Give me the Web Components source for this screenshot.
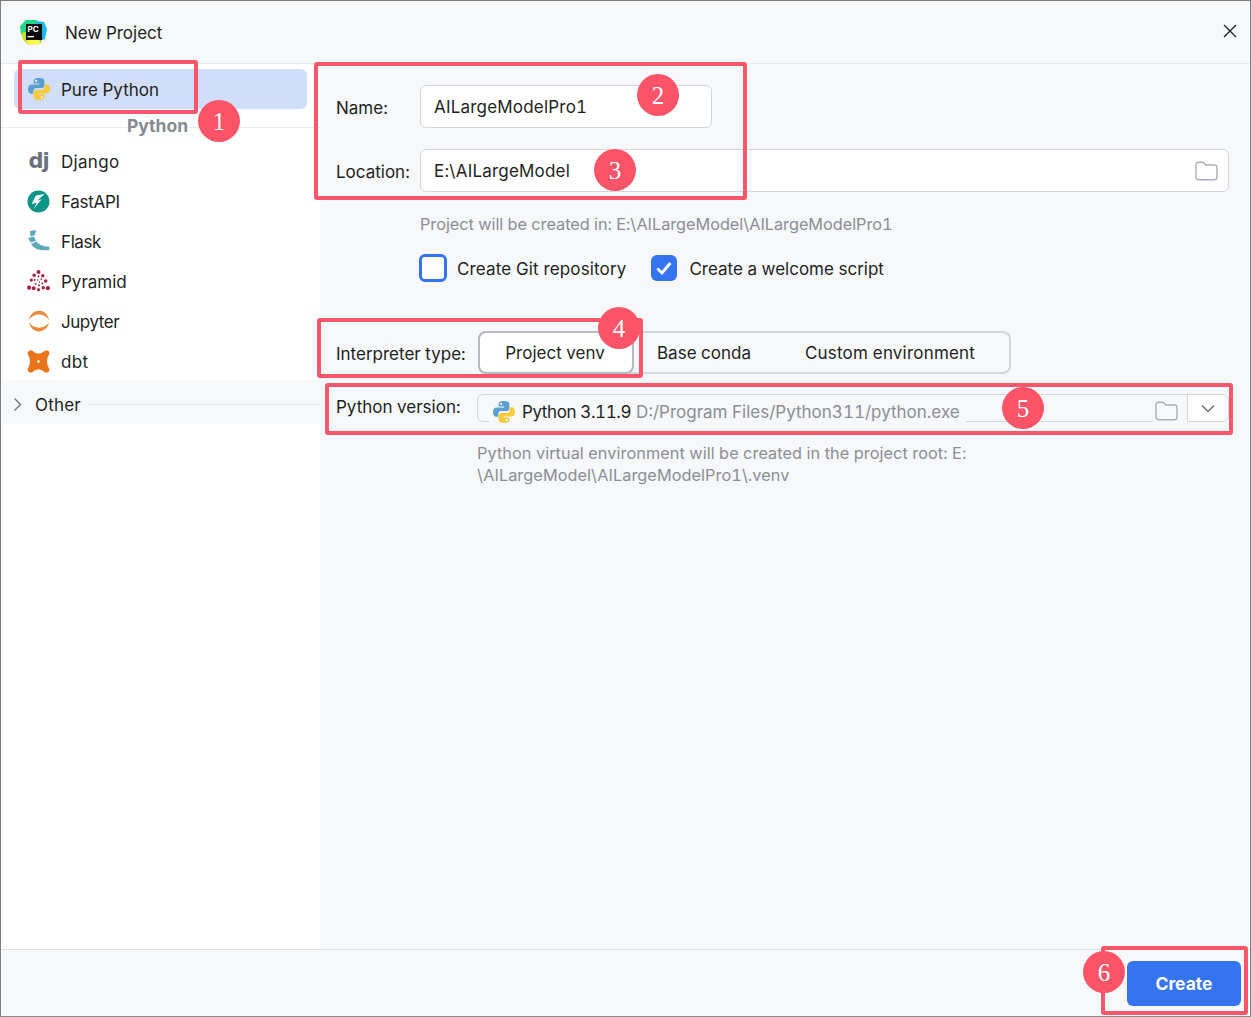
<!DOCTYPE html>
<html lang="en"><head><meta charset="utf-8"><title>New Project</title>
<style>
html,body{margin:0;padding:0;background:#fff}
body{font:17px/24px Inter,"Noto Sans",sans-serif;color:#1e1f22;font-variant-numeric:tabular-nums}
</style></head>
<body>
<template id="py"><svg width="24" height="24" viewBox="0 0 24 24"><path fill="#5a9fd0" d="M11.9 1C7 1 6.6 3 6.6 4.200V6.600H12.200V7.400H4.500C2.500 7.400 1 9 1 12S2.400 16.800 4.200 16.800H6.300V14C6.300 12.200 7.600 11 9.400 11H14.600C16.200 11 17.400 9.800 17.400 8.300V4C17.400 2.300 15.600 1 11.900 1Z"/><circle cx="9.200" cy="3.900" r="1.100" fill="#fff"/><g transform="rotate(180 12 12)"><path fill="#f8ca3c" d="M11.900 1C7 1 6.600 3 6.600 4.200V6.600H12.200V7.400H4.500C2.500 7.400 1 9 1 12S2.400 16.800 4.200 16.800H6.300V14C6.300 12.200 7.600 11 9.400 11H14.600C16.200 11 17.400 9.800 17.400 8.300V4C17.400 2.300 15.600 1 11.900 1Z"/><circle cx="9.200" cy="3.900" r="1.100" fill="#fff"/></g></svg></template>
<template id="folder"><svg width="23" height="20" viewBox="0 0 23 20" fill="none" stroke="#a9aeb9" stroke-width="1.4"><path d="M1 4C1 2.300 2 1.200 3.600 1.200H8.200L10.800 4H19.400C21 4 22 5 22 6.600V16C22 17.700 21 18.800 19.400 18.800H3.600C2 18.800 1 17.700 1 16Z"/></svg></template>

<script>
function el(id){return document.getElementById(id).content.cloneNode(true)}
function def(name,css,html,setup){
  customElements.define(name,class extends HTMLElement{
    connectedCallback(){
      if(this.shadowRoot)return;
      const s=this.attachShadow({mode:'open'});
      s.innerHTML='<style>'+css+'</style>'+(typeof html==='function'?html(this):html);
      if(setup)setup(s,this);
    }
  });
}
def('np-title',`:host{display:flex;align-items:center;height:63px;box-sizing:border-box;padding:0 12px 0 19px;background:#f7f8fa;border-bottom:1px solid #e9eaee;flex:none}
.t{margin-left:18px;flex:1;position:relative;top:1px}svg{display:block}`,
`<svg width="27" height="27" viewBox="0 0 27 27"><path fill="#21d789" d="M6 1 17 1 20 8 12 15 1 16 0 7Z"/><path fill="#c8e030" d="M1 14 10 12 19 18 22 24 9 26 3 21Z"/><path fill="#fcf84a" d="M6 19 19 19 20 25 9 26Z"/><path fill="#19b8e8" d="M16 2 24 3 27 10 25 20 20 22Z"/><rect x="6" y="5" width="16" height="16" fill="#0c0c0c"/><text x="7.500" y="13" font-family="Inter,sans-serif" font-size="8" font-weight="700" fill="#fff">PC</text><rect x="7.500" y="17" width="6.500" height="1.300" fill="#fff"/></svg><span class="t"><slot></slot></span><svg width="16" height="16" viewBox="0 0 16 16" stroke="#1e1f22" stroke-width="1.300" fill="none" style="margin-top:-2px"><path d="M2 2 14 14M14 2 2 14"/></svg>`);

def('np-row',`:host{display:flex;align-items:center;height:40px;padding-left:26px;gap:11px;flex:none}
:host([selected]){background:#d0def9;border-radius:6px;margin:5px 13px 0;padding-left:13px}
.i{width:23px;height:24px;display:flex;align-items:center;justify-content:center;flex:none}
.x{position:relative;top:1px}`,
`<span class="i"><slot name="icon"></slot></span><span class="x"><slot></slot></span>`);

def('np-sep',`:host{display:flex;align-items:center;justify-content:center;height:36px;position:relative;flex:none;font-weight:700;color:#868a92;font-size:17.500px}
:host::before{content:"";position:absolute;left:0;right:0;top:18px;height:1px;background:#e9eaee}
span{position:relative;background:#fff;left:-3px;top:-1px}`,`<span><slot></slot></span>`);

def('np-other',`:host{display:flex;align-items:center;height:44px;box-sizing:border-box;padding-top:4px;background:#f7f8fa;flex:none;margin-top:-1px;letter-spacing:.2px}
svg{margin-left:11px;margin-right:12px;flex:none}i{flex:1;height:1px;background:#e6e7eb;margin-left:7px}
span{position:relative;top:1px}`,
`<svg width="11" height="15" viewBox="0 0 11 15" fill="none" stroke="#6c707e" stroke-width="1.400"><path d="M2.500 1.500 8.500 7.500 2.500 13.500"/></svg><span><slot></slot></span><i></i>`);

def('np-sidebar',`:host{display:flex;flex-direction:column;width:319px;flex:none;background:#fff}`,`<slot></slot>`);

def('np-input',`:host{display:flex;align-items:center;box-sizing:border-box;height:43px;padding:1px 10px 0 13px;background:#fff;border:1px solid #d3d5db;border-radius:6px;letter-spacing:.2px}
span{flex:1}`,`<span><slot></slot></span><slot name="end"></slot>`);

def('np-field',`:host{display:flex;align-items:center;flex:none}
label{width:84px;flex:none;white-space:nowrap;position:relative;top:1px}`,(h)=>`<label>${h.getAttribute('label')}</label><slot></slot>`);

def('np-hint',`:host{display:block;color:#8b8e96;font-size:16.300px;line-height:22px;flex:none}`,`<slot></slot>`);

def('np-check',`:host{display:inline-flex;align-items:center;gap:10px}
b{box-sizing:border-box;width:28px;height:28px;border-radius:6px;background:#fff;border:3px solid #3574f0;display:block}
:host([on]) b{width:26px;height:26px;background:#3574f0;border:0;display:flex;align-items:center;justify-content:center;margin-right:2px}
span{position:relative;top:1px}
svg{display:none}:host([on]) svg{display:block}`,
`<b><svg width="20" height="20" viewBox="0 0 18 18" fill="none" stroke="#fff" stroke-width="2.600"><path d="M3 9.500 7.200 13.500 14.800 4.500"/></svg></b><span><slot></slot></span>`);

def('np-seg',`:host{display:flex;box-sizing:border-box;height:43px;border:2px solid #d3d5db;border-radius:8px;width:533px;align-items:center}`,`<slot></slot>`);
def('np-seg-item',`:host{display:flex;align-items:center;justify-content:center;box-sizing:border-box;height:43px;margin:-2px 0;padding-top:1px}
:host([active]){background:#fff;border:2px solid #b6b9c0;border-radius:8px;width:156px;margin-left:-2px;padding-right:2px}`,`<slot></slot>`);

def('np-combo',`:host{display:flex;box-sizing:border-box;height:28px;width:752px;border:1px solid #d3d5db;border-radius:6px;align-items:flex-start}
.v{display:flex;align-items:center;gap:5px;height:29px;margin:2px 0 -4px 11px;padding-left:3px;background:#f7f8fa;padding-right:6px;flex:none}
.n{letter-spacing:-.4px}.g{color:#8b8e96}.sp{flex:1}
.f{background:#f7f8fa;height:28px;margin-bottom:-2px;display:flex;align-items:flex-start;padding:6px 9px 0 2px}
.dd{width:41px;height:26px;box-sizing:border-box;background:#fff;border-left:1px solid #d3d5db;border-radius:0 6px 6px 0;display:flex;align-items:center;justify-content:center}
svg{display:block}`,
`<div class="v"><span id="p" style="display:flex;margin-right:1px"></span><span class="n"><slot></slot></span><span class="g"><slot name="path"></slot></span></div><span class="sp"></span><div class="f" id="f"></div><div class="dd"><svg width="14" height="9" viewBox="0 0 14 9" fill="none" stroke="#6c707e" stroke-width="1.500"><path d="M1 1.500 7 7.500 13 1.500"/></svg></div>`,
(s)=>{s.getElementById('p').append(el('py'));s.getElementById('f').append(el('folder'));});

def('np-panel',`:host{display:flex;flex-direction:column;flex:1;min-width:0;background:#f7f8fa;padding:21px 21px 0 16px}`,`<slot></slot>`);

def('np-footer',`:host{display:flex;justify-content:flex-end;align-items:flex-start;height:67px;box-sizing:border-box;border-top:1px solid #dfe1e5;background:#f7f8fa;padding:11px 9px 0 0;flex:none}`,`<slot></slot>`);
def('np-button',`:host{display:flex;align-items:center;justify-content:center;box-sizing:border-box;width:114px;height:45px;background:#3574f0;border-radius:6px;color:#fff;font-weight:700;font-size:17.500px}`,`<slot></slot>`);

def('np-app',`:host{display:flex;flex-direction:column;box-sizing:border-box;width:1251px;height:1017px;border:1px solid #7d7d7d;border-bottom-color:#8a8a8a;position:relative;overflow:hidden}
.m{display:flex;flex:1;min-height:0}`,`<slot name="title"></slot><div class="m"><slot name="side"></slot><slot name="panel"></slot></div><slot name="footer"></slot><slot name="notes"></slot>`);

def('np-box',`:host{position:absolute;box-sizing:border-box;border:4px solid #f8566a;border-radius:3px;pointer-events:none}`,``,
(s,h)=>{const [x,y,w,ht]=h.getAttribute('at').split(',');h.style.cssText=`left:${x-1}px;top:${y-1}px;width:${w}px;height:${ht}px`;});
def('np-badge',`:host{position:absolute;width:42px;height:42px;border-radius:50%;background:#fb5468;color:#fff;display:flex;align-items:center;justify-content:center;font:25px/1 "Liberation Serif",serif}`,`<slot></slot>`,
(s,h)=>{const [x,y]=h.getAttribute('at').split(',');h.style.left=(x-22)+'px';h.style.top=(y-22)+'px';});
</script>

<np-app>
  <np-title slot="title">New Project</np-title>
  <np-sidebar slot="side">
    <np-row selected><span slot="icon" id="i0" style="display:flex"></span>Pure Python</np-row>
    <np-sep>Python</np-sep>
    <np-row style="margin-top:-4px;letter-spacing:.3px"><span slot="icon" style="font:700 21px/24px 'DejaVu Sans',sans-serif;color:#6c707e;letter-spacing:-1px">dj</span>Django</np-row>
    <np-row style="letter-spacing:-.3px"><svg slot="icon" width="23" height="23" viewBox="0 0 23 23"><circle cx="11.500" cy="11.500" r="11" fill="#0f9488"/><path fill="#fff" d="M17.500 4 9 5.500 4.500 14 10 12.800 6.500 19 14.500 9.500 10.800 10Z"/></svg>FastAPI</np-row>
    <np-row style="letter-spacing:-.4px"><svg slot="icon" width="23" height="22" viewBox="0 0 23 22" fill="#5fa8b8"><path d="M3 1 9 0 8 5 3.500 6.500ZM1 8 7 6.500 9 11 3.500 12.500ZM4 14 9.500 11.500C12 15 16 16.500 22 16.500L22.500 20C15 21 7.500 20 4 14Z"/></svg>Flask</np-row>
    <np-row><svg slot="icon" width="24" height="24" viewBox="0 0 24 24" fill="#a8203f"><circle cx="12" cy="2.500" r="2.100"/><circle cx="7.500" cy="6" r="1.800"/><circle cx="16.500" cy="6.500" r="1.800"/><circle cx="4.500" cy="11" r="1.700"/><circle cx="19.500" cy="12" r="1.900"/><circle cx="2.200" cy="19" r="2.200"/><circle cx="7" cy="19.500" r="2"/><circle cx="12" cy="21" r="1.600"/><circle cx="17" cy="19" r="1.800"/><circle cx="21.800" cy="19.500" r="2.200"/><circle cx="12" cy="7" r="1"/><circle cx="8" cy="11" r="1"/><circle cx="15" cy="10" r="1"/><circle cx="16" cy="14.500" r="1"/><circle cx="9" cy="15" r="1"/><circle cx="12.500" cy="16.500" r="1"/><circle cx="11" cy="11" r=".7"/><circle cx="13" cy="13" r=".7"/></svg>Pyramid</np-row>
    <np-row style="letter-spacing:-.45px"><svg slot="icon" width="22" height="22" viewBox="0 0 22 22" fill="#e98a3c"><path d="M1 10C3-2.500 19-2.500 21 10 17 2.500 5 2.500 1 10Z"/><path d="M1 12C3 24.500 19 24.500 21 12 17 19.500 5 19.500 1 12Z"/></svg>Jupyter</np-row>
    <np-row style="letter-spacing:.3px"><svg slot="icon" width="23" height="23" viewBox="0 0 23 23"><path fill="#e8751a" d="M3 .5C4.500 0 5.500.8 7 2 9.500 4 13.500 4 16 2 17.500.8 19 0 20.500.6 22.500 1.500 23 3.500 21.800 5.300 19.500 8.500 19.500 14.500 21.800 17.700 23 19.500 22.500 21.500 20.500 22.400 19 23 17.500 22.200 16 21 13.500 19 9.500 19 7 21 5.500 22.200 4 23 2.500 22.400.5 21.500 0 19.500 1.200 17.700 3.500 14.500 3.500 8.500 1.200 5.300 0 3.500.800 1.300 3 .5Z"/><circle cx="11.500" cy="11.500" r="1.300" fill="#fff"/></svg>dbt</np-row>
    <np-other>Other</np-other>
  </np-sidebar>
  <np-panel slot="panel">
    <np-field label="Name:"><np-input style="width:292px">AILargeModelPro1</np-input></np-field>
    <np-field label="Location:" style="margin-top:21px"><np-input style="flex:1">E:\AILargeModel<span slot="end" id="fd" style="display:flex"></span></np-input></np-field>
    <np-hint style="margin:21px 0 0 84px;letter-spacing:-.03px">Project will be created in: E:\AILargeModel\AILargeModelPro1</np-hint>
    <div style="display:flex;align-items:center;gap:25px;margin:19px 0 0 83px;height:28px;flex:none">
      <np-check style="letter-spacing:.14px">Create Git repository</np-check>
      <np-check on>Create a welcome script</np-check>
    </div>
    <np-field label="Interpreter type:" style="margin-top:49px"><span style="width:58px;flex:none"></span><np-seg>
      <np-seg-item active>Project venv</np-seg-item>
      <np-seg-item style="width:140px">Base conda</np-seg-item>
      <np-seg-item style="width:232px;letter-spacing:.2px">Custom environment</np-seg-item>
    </np-seg></np-field>
    <np-field label="Python version:" style="margin-top:20px;align-items:flex-start"><span style="width:57px;flex:none"></span><np-combo>Python 3.11.9<span slot="path">D:/Program Files/Python311/python.exe</span></np-combo></np-field>
    <np-hint style="margin:20px 0 0 141px;width:520px;letter-spacing:.06px">Python virtual environment will be created in the project root: E:<br>\AILargeModel\AILargeModelPro1\.venv</np-hint>
  </np-panel>
  <np-footer slot="footer"><np-button>Create</np-button></np-footer>
  <div slot="notes">
    <np-box at="18,60,180,54"></np-box>
    <np-box at="314,62,433,138"></np-box>
    <np-box at="317,318,326,60"></np-box>
    <np-box at="325,383,908,52"></np-box>
    <np-box at="1101,946,147,69"></np-box>
    <np-badge at="219,121">1</np-badge>
    <np-badge at="658,95">2</np-badge>
    <np-badge at="615,170">3</np-badge>
    <np-badge at="619,328">4</np-badge>
    <np-badge at="1023,408">5</np-badge>
    <np-badge at="1104,972">6</np-badge>
  </div>
</np-app>
<script>
document.getElementById('i0').append(el('py'));
document.getElementById('fd').append(el('folder'));
</script>
</body></html>
